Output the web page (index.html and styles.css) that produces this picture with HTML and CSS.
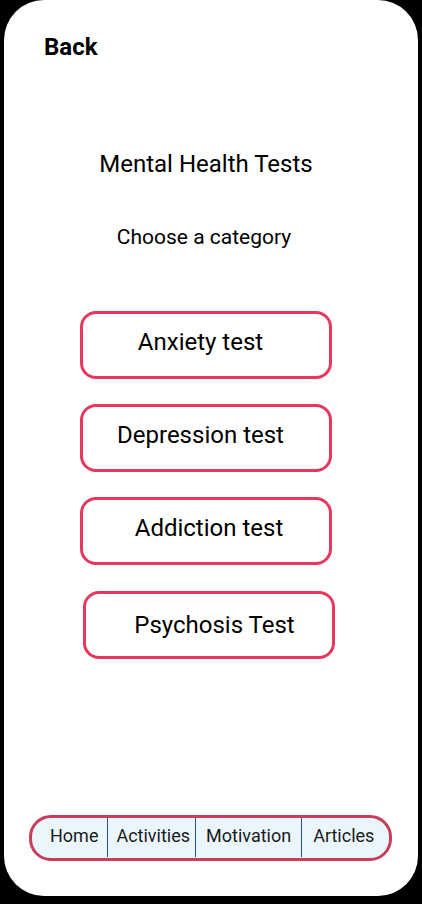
FILE: index.html
```html
<!DOCTYPE html>
<html lang="en">
<head>
<meta charset="utf-8">
<title>Mental Health Tests</title>
<link rel="stylesheet" href="styles.css">
</head>
<body>
<div class="frame">
  <div class="back">Back</div>
  <main class="main">
    <h1 class="title">Mental Health Tests</h1>
    <p class="subtitle">Choose a category</p>
    <div class="tests">
      <button class="test test-anxiety">Anxiety test</button>
      <button class="test test-depression">Depression test</button>
      <button class="test test-addiction">Addiction test</button>
      <button class="test test-psychosis">Psychosis Test</button>
    </div>
  </main>
  <nav class="nav">
    <span class="nav-item nav-home">Home</span>
    <span class="nav-item nav-activities">Activities</span>
    <span class="nav-item nav-motivation">Motivation</span>
    <span class="nav-item nav-articles">Articles</span>
  </nav>
</div>
</body>
</html>
```
FILE: styles.css
```css
html, body {
  margin: 0;
  padding: 0;
  background: #000;
  font-family: Roboto, "Liberation Sans", Arial, sans-serif;
  color: #000;
}

.frame {
  box-sizing: border-box;
  margin-left: 4px;
  width: 414px;
  height: 896px;
  background: #fff;
  border-radius: 40px;
  display: flex;
  flex-direction: column;
  padding: 33px 0 35px 0;
}

.back {
  margin-left: 40px;
  font-size: 24px;
  line-height: 28px;
  font-weight: 700;
}

.main {
  display: flex;
  flex-direction: column;
  align-items: center;
  padding-right: 10px;
}

.title {
  margin: 89px 0 0 0;
  font-size: 24px;
  line-height: 28px;
  font-weight: 400;
}

.subtitle {
  margin: 47px 4px 0 0;
  font-size: 21px;
  line-height: 25px;
}

.tests {
  margin-top: 61px;
  display: flex;
  flex-direction: column;
  align-items: center;
  gap: 25px;
}

.test {
  box-sizing: border-box;
  width: 252px;
  height: 68px;
  border: 3px solid #e8375e;
  border-radius: 16px;
  background: #fff;
  font-family: inherit;
  font-size: 24px;
  line-height: 28px;
  color: #000;
  padding: 0 0 6px 0;
  display: flex;
  align-items: center;
  justify-content: center;
}

.test-anxiety,
.test-depression {
  padding-right: 11px;
}

.test-addiction {
  padding-left: 6px;
}

.test-psychosis {
  margin-left: 6px;
  margin-top: 1px;
  padding: 0 0 1px 11px;
}

.nav {
  box-sizing: border-box;
  margin-top: auto;
  margin-left: 25px;
  width: 363px;
  height: 46px;
  border: 3px solid #c73e5b;
  border-radius: 22px;
  background: #ebf6fc;
  display: flex;
  padding-left: 9px;
}

.nav-item {
  display: flex;
  align-items: center;
  padding: 0 9px 4px 9px;
  font-size: 18px;
  color: #1a1a1a;
  border-left: 1px solid #2a4f8a;
  margin-bottom: 1px;
}

.nav-home {
  border-left: none;
}

.nav-activities {
  padding-left: 8px;
  padding-right: 5px;
}

.nav-motivation {
  padding-left: 10px;
  padding-right: 10px;
}

.nav-articles {
  padding-left: 11px;
}
```
